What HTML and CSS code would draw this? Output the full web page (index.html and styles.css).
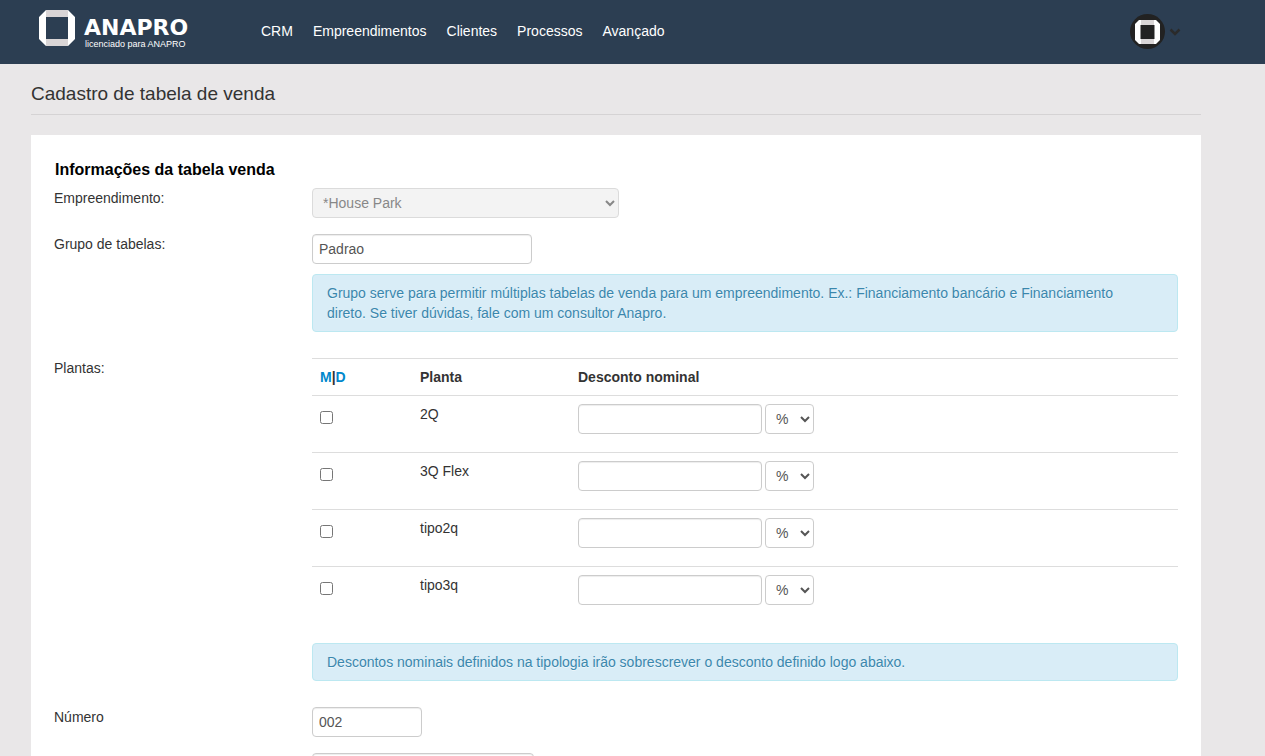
FILE: index.html
```html
<!DOCTYPE html>
<html lang="pt-BR">
<head>
  <meta charset="UTF-8">
  <title>Cadastro de tabela de venda</title>
  <meta name="viewport" content="width=device-width, initial-scale=1.0">
  <link rel="stylesheet" href="styles.css">
</head>
<body>
  <!-- Top bar -->
  <header class="topbar">
    <a href="#" class="brand">
      <svg class="brand-icon" width="36" height="36" viewBox="0 0 36 36" aria-hidden="true">
        <path fill="#d9d5d6" d="M7 0h22v7H7zM7 29h22v7H7z"/>
        <path fill="#fff" d="M7 0v36L0 29V7zM29 0v36l7-7V7z"/>
      </svg>
      <span class="brand-text">
        <span class="brand-name">ANAPRO</span>
        <span class="brand-sub">licenciado para ANAPRO</span>
      </span>
    </a>
    <nav class="menu">
      <a href="#">CRM</a>
      <a href="#">Empreendimentos</a>
      <a href="#">Clientes</a>
      <a href="#">Processos</a>
      <a href="#">Avançado</a>
    </nav>
    <button type="button" class="user" aria-label="Usuário">
      <svg width="36" height="36" viewBox="0 0 36 36" aria-hidden="true">
        <circle cx="17.500" cy="17.500" r="17.500" fill="#222"/>
        <path fill="#d9d5d6" d="M10 6h15v5H10zM10 25h15v5H10z"/>
        <path fill="#fff" d="M9 6h2v24H9l-4-4V10zM26 6h-2v24h2l4-4V10z"/>
        <path fill="#222" d="M10.500 11h14v14h-14z"/>
      </svg>
      <svg width="12" height="10" viewBox="0 0 12 10" aria-hidden="true">
        <path d="M1.500 2.500L6 7l4.500-4.500" fill="none" stroke="#2b2b2b" stroke-width="2.500"/>
      </svg>
    </button>
  </header>

  <main class="container">
    <h1 class="page-title">Cadastro de tabela de venda</h1>

    <form class="card">
      <h2 class="card-title">Informações da tabela venda</h2>

      <div class="row">
        <label for="empreendimento">Empreendimento:</label>
        <div class="controls">
          <select id="empreendimento" class="large" disabled>
            <option>*House Park</option>
          </select>
        </div>
      </div>

      <div class="row">
        <label for="grupo">Grupo de tabelas:</label>
        <div class="controls">
          <input type="text" id="grupo" class="medium" value="Padrao">
          <div class="alert">Grupo serve para permitir múltiplas tabelas de venda para um empreendimento. Ex.: Financiamento bancário e Financiamento direto. Se tiver dúvidas, fale com um consultor Anapro.</div>
        </div>
      </div>

      <div class="row">
        <span>Plantas:</span>
        <div class="controls">
          <table class="plantas">
            <thead>
              <tr>
                <th class="col-check"><a href="#">M</a>|<a href="#">D</a></th>
                <th class="col-planta">Planta</th>
                <th>Desconto nominal</th>
              </tr>
            </thead>
            <tbody>
              <tr>
                <td><input type="checkbox" id="planta1"></td>
                <td><label for="planta1">2Q</label></td>
                <td>
                  <div class="desconto">
                    <input type="text" aria-label="Desconto 2Q">
                    <select aria-label="Tipo de desconto 2Q"><option>%</option><option>R$</option></select>
                  </div>
                </td>
              </tr>
              <tr>
                <td><input type="checkbox" id="planta2"></td>
                <td><label for="planta2">3Q Flex</label></td>
                <td>
                  <div class="desconto">
                    <input type="text" aria-label="Desconto 3Q Flex">
                    <select aria-label="Tipo de desconto 3Q Flex"><option>%</option><option>R$</option></select>
                  </div>
                </td>
              </tr>
              <tr>
                <td><input type="checkbox" id="planta3"></td>
                <td><label for="planta3">tipo2q</label></td>
                <td>
                  <div class="desconto">
                    <input type="text" aria-label="Desconto tipo2q">
                    <select aria-label="Tipo de desconto tipo2q"><option>%</option><option>R$</option></select>
                  </div>
                </td>
              </tr>
              <tr>
                <td><input type="checkbox" id="planta4"></td>
                <td><label for="planta4">tipo3q</label></td>
                <td>
                  <div class="desconto">
                    <input type="text" aria-label="Desconto tipo3q">
                    <select aria-label="Tipo de desconto tipo3q"><option>%</option><option>R$</option></select>
                  </div>
                </td>
              </tr>
            </tbody>
          </table>
          <div class="alert">Descontos nominais definidos na tipologia irão sobrescrever o desconto definido logo abaixo.</div>
        </div>
      </div>

      <div class="row">
        <label for="numero">Número</label>
        <div class="controls">
          <input type="text" id="numero" class="small" value="002">
        </div>
      </div>

      <div class="row">
        <span></span>
        <div class="controls">
          <input type="text" class="wide" aria-label="Descrição">
        </div>
      </div>
    </form>
  </main>
</body>
</html>
```
FILE: styles.css
```css
/* Base */
* { box-sizing: border-box; }
body {
  margin: 0;
  background: #e9e7e8;
  color: #333;
  font-family: "Liberation Sans", Arial, sans-serif;
  font-size: 14px;
  line-height: 20px;
}
a {
  color: #0088cc;
  text-decoration: none;
}

/* Top bar */
.topbar {
  display: flex;
  align-items: center;
  height: 64px;
  padding: 0 84px 0 39px;
  background: #2c3e52;
}
.brand {
  display: flex;
  align-self: flex-start;
  gap: 9px;
  width: 222px;
  padding-top: 10px;
  color: #fff;
}
.brand-text {
  display: flex;
  flex-direction: column;
  padding-top: 9px;
}
.brand-name {
  font-family: "DejaVu Sans", sans-serif;
  font-size: 22px;
  font-weight: bold;
  line-height: 18px;
}
.brand-sub {
  padding-left: 1px;
  font-size: 9px;
  line-height: 14px;
}
.menu {
  display: flex;
  gap: 20px;
  padding-bottom: 2px;
}
.menu a { color: #fff; }
.user {
  display: flex;
  align-items: center;
  gap: 3px;
  margin-left: auto;
  padding: 0;
  border: none;
  background: none;
  cursor: pointer;
}

/* Page */
.container {
  max-width: 1170px;
  margin-left: 31px;
}
.page-title {
  margin: 0 0 20px;
  padding: 20px 0 10px;
  border-bottom: 1px solid #d5d3d4;
  font-size: 19px;
  font-weight: normal;
  line-height: 20px;
}
.card {
  padding: 25px 23px;
  background: #fff;
}
.card-title {
  margin: 0 0 8px;
  padding-left: 1px;
  color: #000;
  font-size: 16px;
  line-height: 20px;
}

/* Form rows */
.row {
  display: grid;
  grid-template-columns: 258px 1fr;
  margin-bottom: 16px;
}
input[type="text"],
select {
  display: block;
  height: 30px;
  padding: 4px 6px;
  border: 1px solid #ccc;
  border-radius: 4px;
  background-color: #fff;
  color: #555;
  font-family: inherit;
  font-size: 14px;
}
input[type="text"] { box-shadow: inset 0 1px 1px rgba(0, 0, 0, 0.075); }
select:disabled {
  background-color: #eee;
  color: #555;
}
.small { width: 110px; }
.medium { width: 220px; }
.wide { width: 222px; }
.large { width: 307px; }

.alert {
  margin: 10px 0;
  padding: 8px 35px 8px 14px;
  border: 1px solid #bce8f1;
  border-radius: 4px;
  background: #d9edf7;
  color: #3a87ad;
  text-shadow: 0 1px 0 rgba(255, 255, 255, 0.5);
}

/* Plantas table */
.plantas {
  width: 100%;
  margin-bottom: 20px;
  border-collapse: separate;
  border-spacing: 0;
}
.plantas th,
.plantas td {
  padding: 8px;
  border-top: 1px solid #ddd;
  text-align: left;
  vertical-align: top;
}
.col-check { width: 100px; }
.col-planta { width: 158px; }
.plantas input[type="checkbox"] {
  display: block;
  width: 13px;
  height: 13px;
  margin: 7px 0 0;
}
.desconto {
  display: flex;
  gap: 3px;
  margin-bottom: 10px;
}
.desconto input { width: 184px; }
.desconto select { width: 49px; }
```
